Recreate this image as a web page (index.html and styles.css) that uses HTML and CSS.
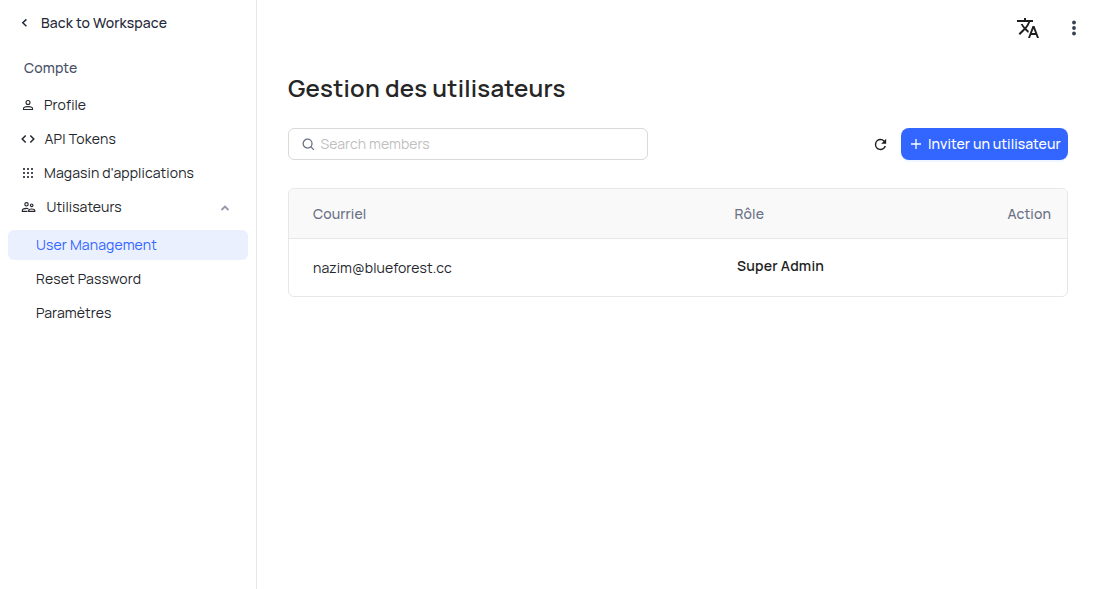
FILE: index.html
```html
<!DOCTYPE html>
<html lang="fr">
<head>
<meta charset="utf-8">
<title>Gestion des utilisateurs</title>
<link rel="stylesheet" href="styles.css">
</head>
<body>
<div class="app">
  <aside class="sidebar">
    <a class="back"><svg class="back-icon" viewBox="0 0 8 10"><path d="M5.400 1.400 1.800 4.800l3.600 3.400"/></svg><span class="t-back">Back to Workspace</span></a>
    <div class="section"><span class="t-compte">Compte</span></div>
    <nav class="nav">
      <a class="item"><svg class="icon i-user" viewBox="0 0 14 14"><circle cx="7" cy="4.500" r="2"/><path d="M2.500 11.500v-.9c0-1.200 2.300-2 4.500-2s4.500.8 4.500 2v.9z"/></svg><span class="t-profile">Profile</span></a>
      <a class="item"><svg class="icon i-code" viewBox="0 0 14 14"><path d="M4.700 3.500 1.200 7l3.500 3.500M9.300 3.500 12.800 7l-3.500 3.500"/></svg><span class="t-api">API Tokens</span></a>
      <a class="item"><svg class="icon i-grid" viewBox="0 0 12 12"><path d="M1 1h2v2H1zM5 1h2v2H5zM9 1h2v2H9zM1 5h2v2H1zM5 5h2v2H5zM9 5h2v2H9zM1 9h2v2H1zM5 9h2v2H5zM9 9h2v2H9z"/></svg><span class="t-store">Magasin d'applications</span></a>
      <a class="item"><svg class="icon i-users" viewBox="0 0 15 14"><circle cx="5.500" cy="4.300" r="1.700"/><circle cx="10.700" cy="5.300" r="1.300"/><path d="M6.500 11.400H1.300v-.9c0-1.300 2.300-2.100 4.200-2.100.8 0 1.300.1 1.900.3M7.600 11.400v-.7c0-1.100 1.700-1.700 3.100-1.700s3.100.6 3.100 1.700v.7z"/></svg><span class="t-users">Utilisateurs</span><svg class="caret" viewBox="0 0 10 8"><path d="M1.500 6 5 2.500 8.500 6"/></svg></a>
    </nav>
    <nav class="subnav">
      <a class="sub active"><span class="t-um">User Management</span></a>
      <a class="sub"><span class="t-rp">Reset Password</span></a>
      <a class="sub"><span class="t-param">Paramètres</span></a>
    </nav>
  </aside>
  <main class="main">
    <header class="topbar">
      <svg class="translate" viewBox="0 0 24 24"><path d="M12.870 15.070l-2.540-2.510.03-.03c1.740-1.940 2.980-4.170 3.710-6.530H17V4h-7V2H8v2H1v1.990h11.170C11.500 7.920 10.440 9.750 9 11.350 8.070 10.320 7.300 9.190 6.690 8h-2c.73 1.630 1.730 3.170 2.980 4.560l-5.090 5.020L4 19l5-5 3.110 3.110.76-2.040zM18.500 10h-2L12 22h2l1.120-3h4.750L21 22h2l-4.500-12zm-2.620 7 1.620-4.330L19.120 17h-3.240z"/></svg>
      <svg class="dots" viewBox="0 0 6 16"><circle cx="3" cy="2.500" r="1.900"/><circle cx="3" cy="8" r="1.900"/><circle cx="3" cy="13.500" r="1.900"/></svg>
    </header>
    <h1 class="title"><span class="t-title">Gestion des utilisateurs</span></h1>
    <div class="tools">
      <div class="search"><svg class="search-icon" viewBox="0 0 14 14"><circle cx="6" cy="6" r="4.800"/><path d="m9.600 9.600 3.200 3.200"/></svg><span class="t-search">Search members</span></div>
      <div class="actions">
        <svg class="reload" viewBox="0 0 24 24"><path d="M17.650 6.350A7.960 7.960 0 0 0 12 4a8 8 0 1 0 7.730 10h-2.080A6 6 0 1 1 12 6c1.660 0 3.140.69 4.220 1.780L13 11h7V4l-2.350 2.350z"/></svg>
        <button class="invite"><svg class="plus" viewBox="0 0 12 12"><path d="M6 1v10M1 6h10"/></svg><span class="t-invite">Inviter un utilisateur</span></button>
      </div>
    </div>
    <section class="table">
      <div class="row head"><span class="c1"><span class="t-mail">Courriel</span></span><span class="c2"><span class="t-role">Rôle</span></span><span class="c3"><span class="t-action">Action</span></span></div>
      <div class="row body"><span class="c1"><span class="t-addr">nazim@blueforest.cc</span></span><span class="c2 role"><span class="t-super">Super Admin</span></span><span class="c3"></span></div>
    </section>
  </main>
</div>
</body>
</html>
```
FILE: styles.css
```css
* { box-sizing: border-box; }
body { margin: 0; background: #fff; color: #24272d; font: 14px/20px Manrope, Inter, sans-serif; white-space: nowrap; }
.app { display: flex; height: 589px; }
.sidebar { width: 257px; border-right: 1px solid #e7e7e9; padding: 13px 8px 0; }
.back { display: flex; align-items: center; gap: 12.500px; padding-left: 12.500px; color: #1f293a; font-weight: 500; }
.back-icon { width: 8px; height: 10px; fill: none; stroke: #1f293a; stroke-width: 1.500; }
.section { margin-top: 25px; padding-left: 16px; color: #4a5268; font-weight: 500; }
.nav { margin-top: 10px; }
.item { display: flex; align-items: center; height: 34px; padding-left: 13px; }
.icon { width: 14px; height: 14px; margin-right: 9px; fill: none; stroke: #24272d; stroke-width: 1.100; }
.i-code { margin-right: 9.500px; stroke-width: 1.500; }
.i-grid { width: 12px; height: 12px; margin: 0 10px 0 1px; fill: #4a4d53; stroke: none; }
.i-users { width: 15px; margin-right: 10.500px; }
.caret { width: 10px; height: 8px; margin: 2px 18px 0 auto; fill: none; stroke: #9499a8; stroke-width: 1.800; }
.subnav { display: grid; gap: 4px; margin-top: 6px; }
.sub { display: flex; align-items: center; height: 30px; padding-left: 28px; border-radius: 6px; }
.active { background: #ebf0ff; color: #3366ff; }
.main { flex: 1; padding: 0 36px 0 31px; }
.topbar { display: flex; justify-content: flex-end; align-items: center; height: 56px; margin-right: -9px; gap: 31px; }
.translate { width: 24px; height: 24px; fill: #1f1f1f; }
.dots { width: 6px; height: 16px; fill: #374151; }
.title { margin: 16px 0 24px; font-size: 24px; line-height: 32px; font-weight: 600; color: #262626; }
.tools { display: flex; justify-content: space-between; height: 32px; }
.search { display: flex; align-items: center; width: 360px; padding-left: 13px; gap: 5.500px; border: 1px solid #d9d9d9; border-radius: 6px; color: #bfbfbf; }
.search-icon { width: 13px; height: 13px; fill: none; stroke: #6a7184; stroke-width: 1.400; }
.actions { display: flex; align-items: center; gap: 12px; }
.reload { width: 17px; height: 17px; fill: #1f1f1f; }
.invite { display: flex; align-items: center; gap: 6px; width: 167px; height: 32px; padding: 0 0 0 9px; border: 0; border-radius: 8px; background: #3366ff; color: #fff; font: inherit; font-weight: 500; box-shadow: 0 2px 0 rgba(5,95,255,.06); }
.plus { width: 12px; height: 12px; margin-top: -1px; fill: none; stroke: #fff; stroke-width: 1.300; }
.table { margin-top: 28px; border: 1px solid #e7e7e9; border-radius: 6px; overflow: hidden; }
.row { display: grid; grid-template-columns: 421.500px 1fr auto; align-items: center; padding: 0 16px 0 24px; }
.head { height: 50px; background: #f9f9fa; border-bottom: 1px solid #e7e7e9; color: #6a7184; font-weight: 500; }
.body { height: 57px; }
.role { padding: 0 0 3px 2.500px; font-weight: 600; color: #1f1f1f; }

/* Letter spacing per label */
.t-back, .t-um, .t-rp { letter-spacing: .14px; }
.t-store { letter-spacing: .12px; }
.t-api { letter-spacing: .22px; }
.t-profile, .t-param, .t-users, .t-mail, .t-compte, .t-addr { letter-spacing: .08px; }
.t-title { letter-spacing: .21px; }
.t-super { letter-spacing: .18px; }
.t-invite, .t-search { letter-spacing: .05px; }
.t-action, .t-role { letter-spacing: .1px; }
```
